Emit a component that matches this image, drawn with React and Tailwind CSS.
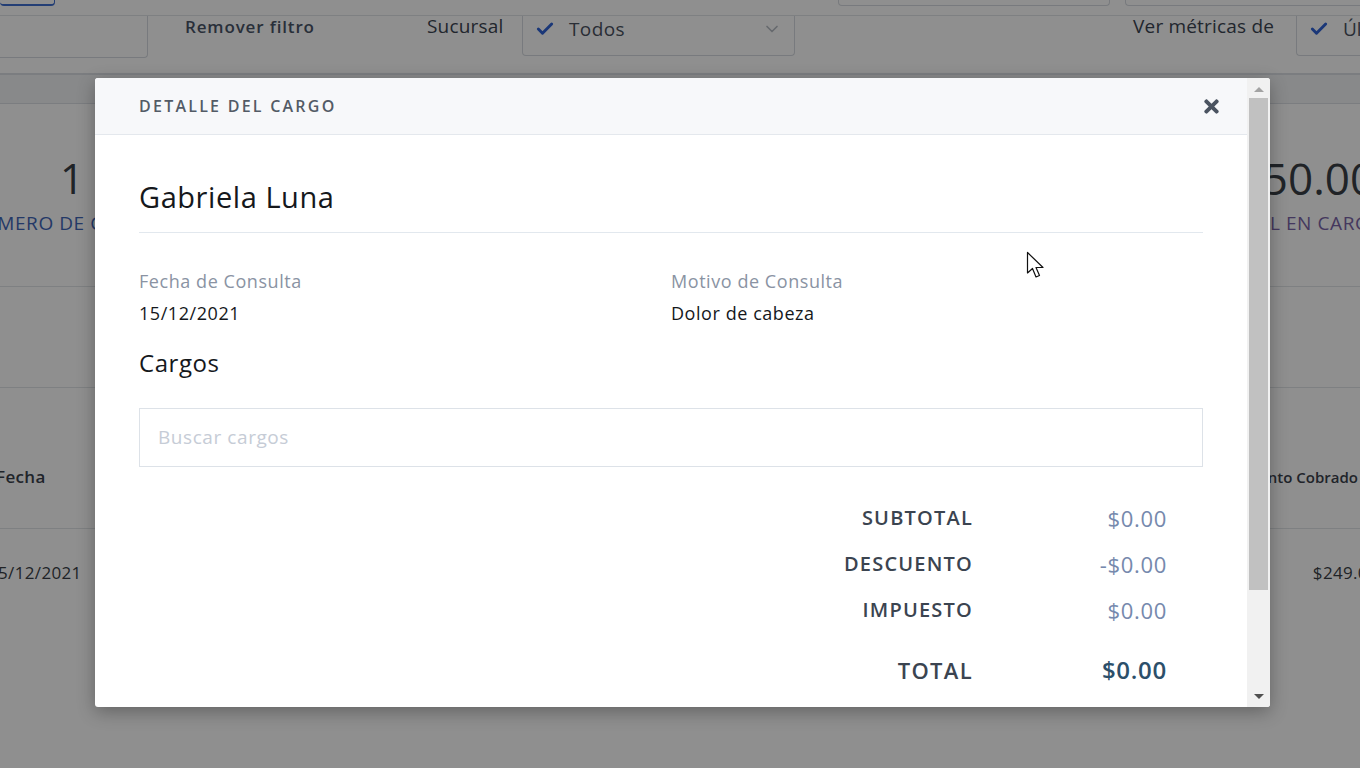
import React from "react";
import { Check, ChevronDown } from "lucide-react";
import { FaTimes } from "react-icons/fa";

function BackgroundPage() {
  return (
    <div className="h-[768px] w-[1360px] overflow-hidden bg-white text-[#3c4552]">
      {/* top inputs strip */}
      <div className="flex h-[15px] items-end">
        <div className="h-[6px] w-[55px] self-start rounded-b border-b-2 border-r border-[#3f6fd0]" />
        <div className="ml-[783px] h-[6px] w-[272px] self-start rounded-b border border-t-0 border-[#d6dae0]" />
        <div className="ml-[15px] h-[6px] flex-1 self-start rounded-bl border border-t-0 border-r-0 border-[#d6dae0]" />
      </div>

      {/* filter row */}
      <div className="flex h-[58px] items-start whitespace-nowrap border-t border-[#e1e4e8]">
        <div className="h-[42px] w-[148px] shrink-0 rounded-br border-r border-b border-[#d6dae0]" />
        <div className="ml-[37px] w-[205px] shrink-0 text-[17px] leading-[22px] font-semibold tracking-[0.05em] text-[#4a5568]">Remover filtro</div>
        <div className="ml-[37px] w-[95px] shrink-0 text-[19px] leading-[20px] tracking-[0.01em]">Sucursal</div>
        <div className="flex h-[40px] w-[273px] shrink-0 items-start rounded-b border border-t-0 border-[#d6dae0] px-[12px] pt-[2px]">
          <Check size={20} strokeWidth={3.5} className="mt-[1px] text-[#2f62d6]" />
          <span className="ml-[14px] text-[19px] leading-[22px] tracking-[0.02em] text-[#4a5260]">Todos</span>
          <ChevronDown size={20} className="ml-auto mt-[1px] text-[#b7bcc4]" />
        </div>
        <div className="ml-[338px] w-[163px] shrink-0 text-[19px] leading-[20px] tracking-[0.01em]">Ver métricas de</div>
        <div className="flex h-[40px] w-[200px] shrink-0 items-start rounded-bl border border-t-0 border-r-0 border-[#d6dae0] pl-[12px] pt-[2px]">
          <Check size={20} strokeWidth={3.5} className="mt-[1px] text-[#2f62d6]" />
          <span className="ml-[14px] text-[19px] leading-[22px] text-[#4a5260]">Últimos 30 días</span>
        </div>
      </div>

      <div className="h-[31px] border-t-2 border-b border-[#dcdfe4] bg-[#f3f4f6]" />

      {/* stats */}
      <div className="flex h-[183px] items-center whitespace-nowrap border-b border-[#e1e4e8]">
        <div className="w-[300px] shrink-0">
          <div className="pl-[60px] text-[42px] leading-[50px] text-[#3a3f47]">1</div>
          <div className="ml-[-32px] mt-[6px] text-[19px] uppercase tracking-[0.03em] text-[#3f66b8]">Número de consultas</div>
        </div>
        <div className="ml-[876px] w-[280px] shrink-0">
          <div className="text-[44px] leading-[50px] text-[#3a3f47]">$1,250.00</div>
          <div className="mt-[6px] pl-[44px] text-[19px] uppercase tracking-[0.03em] text-[#7a64a8]">Total en cargos</div>
        </div>
      </div>

      <div className="h-[101px] border-b border-[#e1e4e8]" />

      {/* table */}
      <div className="flex h-[141px] items-center justify-between whitespace-nowrap border-b border-[#e1e4e8] pt-[38px]">
        <span className="ml-[-4px] text-[17px] font-semibold tracking-[0.02em] text-[#3a414c]">Fecha</span>
        <span className="mr-[2px] text-[15px] font-semibold text-[#3a414c]">Monto Cobrado</span>
      </div>
      <div className="flex h-[88px] items-center justify-between">
        <span className="ml-[-12px] text-[17px] tracking-[0.02em] text-[#3a3f47]">15/12/2021</span>
        <span className="mr-[-18px] text-[17px] tracking-[0.02em] text-[#3a3f47]">$249.00</span>
      </div>
    </div>
  );
}

function Scrollbar() {
  return (
    <div className="flex w-[23px] flex-col items-center bg-[#f1f1f1]">
      <div className="flex h-[20px] items-center justify-center pt-[2px]">
        <div className="h-0 w-0 border-x-[5px] border-b-[5px] border-x-transparent border-b-[#a3a3a3]" />
      </div>
      <div className="h-[492px] w-[19px] bg-[#c1c1c1]" />
      <div className="flex-1" />
      <div className="flex h-[20px] items-center justify-center pb-[2px]">
        <div className="h-0 w-0 border-x-[5px] border-t-[5px] border-x-transparent border-t-[#505050]" />
      </div>
    </div>
  );
}

function TotalRow({ label, value, big }) {
  return (
    <div className="flex items-center justify-end pr-[36px]">
      <span
        className={
          "text-right uppercase font-semibold tracking-[0.06em] text-[#3b4450] " +
          (big ? "text-[22px] leading-[30px]" : "text-[20px] leading-[26px]")
        }
      >
        {label}
      </span>
      <span
        className={
          "w-[194px] text-right tracking-[0.03em] " +
          (big ? "text-[24px] leading-[30px] font-semibold text-[#2c4f6a]" : "text-[22px] leading-[26px] text-[#7689ad]")
        }
      >
        {value}
      </span>
    </div>
  );
}

function ChargeModal() {
  return (
    <div className="flex h-[629px] w-[1175px] overflow-hidden rounded-[3px] bg-white shadow-[0_5px_18px_rgba(0,0,0,0.3)]">
      <div className="flex flex-1 flex-col">
        <div className="flex h-[57px] shrink-0 items-center justify-between border-b border-[#e4e8ed] bg-[#f7f8fa] px-11">
          <span className="text-[16px] font-semibold uppercase tracking-[0.14em] text-[#535b66]">Detalle del cargo</span>
          <FaTimes className="mr-[-19px] text-[21px] text-[#4b5461]" />
        </div>

        <div className="flex-1 overflow-hidden px-11 tracking-[0.035em]">
          <div className="border-b border-[#e2e8ee] pt-[46px] pb-[19px] text-[29px] leading-[32px] text-[#15181c]">Gabriela Luna</div>

          <div className="mt-[36px] grid grid-cols-2">
            <div>
              <div className="text-[18px] leading-[24px] text-[#8a93a3]">Fecha de Consulta</div>
              <div className="mt-2 text-[18px] leading-[24px] text-[#15181c]">15/12/2021</div>
            </div>
            <div>
              <div className="text-[18px] leading-[24px] text-[#8a93a3]">Motivo de Consulta</div>
              <div className="mt-2 text-[18px] leading-[24px] text-[#15181c]">Dolor de cabeza</div>
            </div>
          </div>

          <div className="mt-6 text-[24px] leading-[28px] text-[#15181c]">Cargos</div>

          <div className="mt-[31px] flex h-[59px] items-center border border-[#dde2e8] pl-[18px]">
            <input
              className="w-full bg-transparent text-[19px] tracking-[0.03em] text-[#333] outline-none placeholder:text-[#c6ccd6]"
              placeholder="Buscar cargos"
            />
          </div>

          <div className="mt-[38px] flex flex-col gap-[20px]">
            <TotalRow label="Subtotal" value="$0.00" />
            <TotalRow label="Descuento" value="-$0.00" />
            <TotalRow label="Impuesto" value="$0.00" />
          </div>
          <div className="mt-[32px]">
            <TotalRow label="Total" value="$0.00" big />
          </div>
        </div>
      </div>
      <Scrollbar />
    </div>
  );
}

export default function App() {
  return (
    <div className="relative h-[768px] w-[1360px] overflow-hidden font-['Open_Sans',sans-serif]">
      <BackgroundPage />
      <div className="absolute inset-0 bg-black/[0.44] pl-[95px] pt-[78px]">
        <ChargeModal />
      </div>
      {/* mouse pointer */}
      <svg className="absolute left-[1026px] top-[251px]" width="20" height="30" viewBox="0 0 20 30">
        <path d="M1.5 1.5 L1.5 22 L6.5 17.5 L10 26 L13.5 24.5 L10 16.5 L17 16.5 Z" fill="white" stroke="#111" strokeWidth="1.2" strokeLinejoin="round" />
      </svg>
    </div>
  );
}
